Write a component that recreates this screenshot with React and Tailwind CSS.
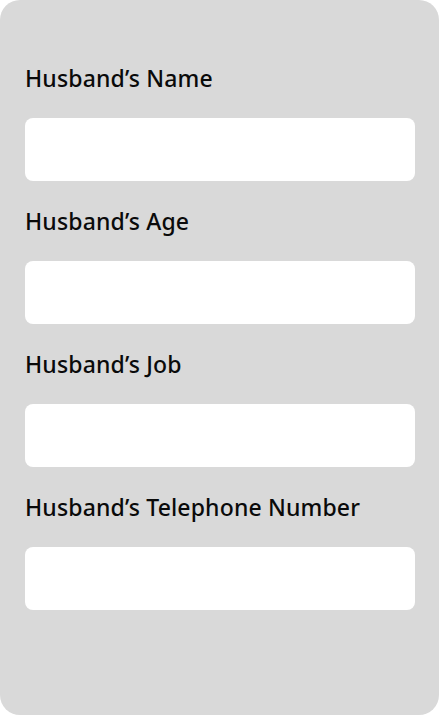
export default function App() {
  const fields = ["Husband’s Name", "Husband’s Age", "Husband’s Job", "Husband’s Telephone Number"];
  return (
    <div className="w-[439px] h-[715px] bg-white">
      <div className="w-[439px] h-[715px] bg-[#d9d9d9] rounded-[20px] px-[25px] pt-[65px] flex flex-col gap-[27px]">
        {fields.map((f) => (
          <div key={f} className="flex flex-col gap-[25px]">
            <div className="h-[28px] leading-[27px] text-[23px] font-medium text-[#0a0a0a] tracking-[0.15px]" style={{ fontFamily: '"Noto Sans", sans-serif' }}>
              <span className="inline-block">{f}</span>
            </div>
            <div className="h-[63px] w-[390px] bg-white rounded-[8px]" />
          </div>
        ))}
      </div>
    </div>
  );
}
